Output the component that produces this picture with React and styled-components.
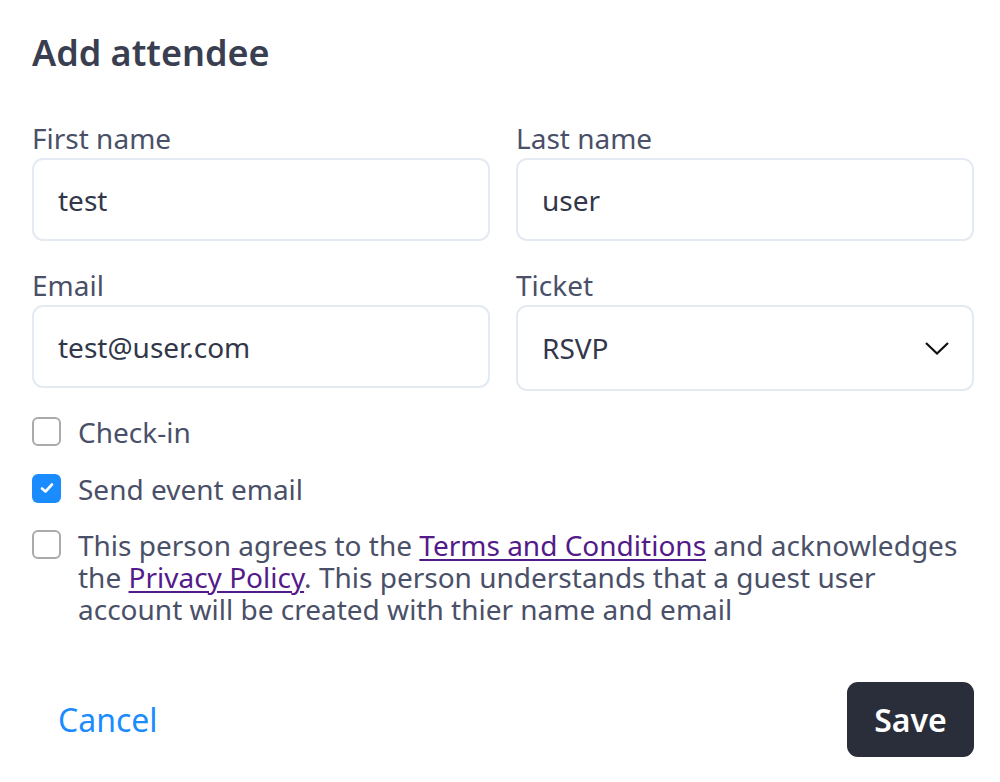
import React from "react";
import styled, { createGlobalStyle } from "styled-components";

const Global = createGlobalStyle`
  html, body { margin: 0; padding: 0; background: #fff; }
  body { font-family: "Noto Sans", "Open Sans", sans-serif; }
  * { box-sizing: border-box; }
`;

const Dialog = styled.div`
  width: 1000px;
  height: 782px;
  padding: 29px 26px 0 32px;
  display: flex;
  flex-direction: column;
  color: #454b63;
`;

const Title = styled.h1`
  margin: 0;
  font-size: 36px;
  line-height: 48px;
  font-weight: 600;
  color: #393e50;
`;

const Grid = styled.div`
  margin-top: 42px;
  display: grid;
  grid-template-columns: 1fr 1fr;
  column-gap: 26px;
  row-gap: 25px;
  align-items: start;
`;

const Field = styled.label`
  display: flex;
  flex-direction: column;
`;

const Label = styled.span`
  font-size: 28px;
  line-height: 38px;
  margin-bottom: 1px;
  color: #4a5068;
`;

const InputBox = styled.div`
  height: ${(p) => p.$h || 83}px;
  border: 2px solid #e3eaf2;
  border-radius: 11px;
  display: flex;
  align-items: center;
  justify-content: space-between;
  padding: 0 23px 0 24px;
  font-size: 28px;
  color: #323749;
`;

const Checks = styled.div`
  margin-top: 25px;
  display: flex;
  flex-direction: column;
  gap: 24.5px;
`;

const CheckRow = styled.div`
  display: flex;
  align-items: flex-start;
  gap: 17px;
  font-size: 28px;
  line-height: 32px;
  color: #4a5068;
`;

const Box = styled.span`
  flex: none;
  width: 29px;
  height: 29px;
  margin-top: 1px;
  border-radius: 6px;
  border: ${(p) => (p.$checked ? "none" : "2px solid #aaaaaa")};
  background: ${(p) => (p.$checked ? "#1a8cff" : "#fff")};
  display: flex;
  align-items: center;
  justify-content: center;
`;

const Link = styled.a`
  color: #531a8a;
  text-decoration: underline;
  text-underline-offset: 3px;
  text-decoration-thickness: 2px;
`;

const Footer = styled.div`
  margin-top: auto;
  margin-bottom: 25px;
  display: flex;
  align-items: center;
  justify-content: space-between;
`;

const CancelBtn = styled.button`
  border: none;
  background: none;
  padding: 0 0 0 26px;
  font-family: inherit;
  font-size: 32px;
  color: #1a8cff;
`;

const SaveBtn = styled.button`
  border: none;
  background: #2a2e3a;
  color: #fff;
  border-radius: 11px;
  width: 127px;
  height: 75px;
  font-family: inherit;
  font-size: 32px;
  font-weight: 600;
`;

const Chevron = () => (
  <svg width="24" height="13" viewBox="0 0 24 13" fill="none">
    <path d="M1 1 L12 11.5 L23 1" stroke="#111" strokeWidth="2.2" />
  </svg>
);

const Tick = () => (
  <svg width="14" height="12" viewBox="0 0 14 12" fill="none">
    <path d="M2 6.5 L5.5 9.5 L12 2.5" stroke="#fff" strokeWidth="2.6" strokeLinecap="round" strokeLinejoin="round" />
  </svg>
);

export default function App() {
  return (
    <>
      <Global />
      <Dialog>
        <Title>Add attendee</Title>
        <Grid>
          <Field>
            <Label>First name</Label>
            <InputBox>test</InputBox>
          </Field>
          <Field>
            <Label>Last name</Label>
            <InputBox>user</InputBox>
          </Field>
          <Field>
            <Label>Email</Label>
            <InputBox>test@user.com</InputBox>
          </Field>
          <Field>
            <Label>Ticket</Label>
            <InputBox $h={86}>
              RSVP
              <Chevron />
            </InputBox>
          </Field>
        </Grid>
        <Checks>
          <CheckRow>
            <Box />
            Check-in
          </CheckRow>
          <CheckRow>
            <Box $checked>
              <Tick />
            </Box>
            Send event email
          </CheckRow>
          <CheckRow>
            <Box />
            <span>
              This person agrees to the <Link>Terms and Conditions</Link> and acknowledges the{" "}
              <Link>Privacy Policy</Link>. This person understands that a guest user account will be
              created with thier name and email
            </span>
          </CheckRow>
        </Checks>
        <Footer>
          <CancelBtn>Cancel</CancelBtn>
          <SaveBtn>Save</SaveBtn>
        </Footer>
      </Dialog>
    </>
  );
}
